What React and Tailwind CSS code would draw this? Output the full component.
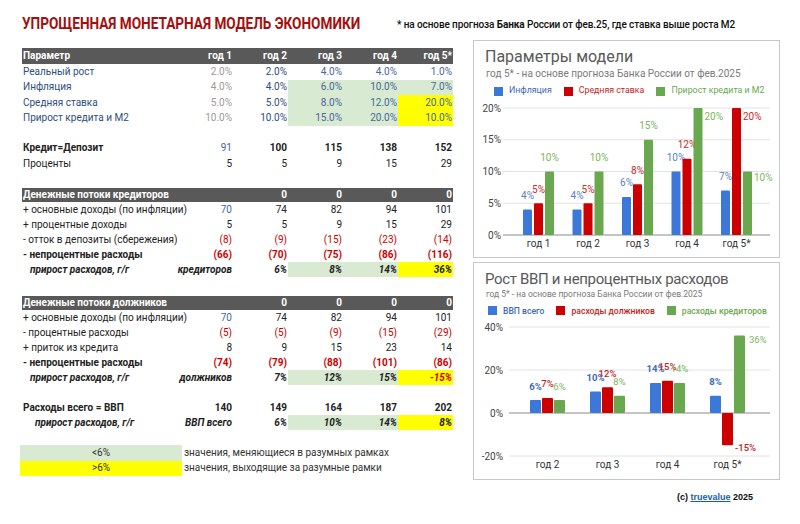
const GREEN = 'bg-[#d9ead3]';
const YELLOW = 'bg-[#ffff00]';
const GRAY = 'text-[#9a9a9a]';
const NAVY = 'text-[#2e4e7e]';
const BLUE = 'text-[#45689c]';
const RED = 'text-[#cc0000]';

const BLUE_C = '#3c78d8';
const RED_C = '#cc0000';
const GREEN_C = '#6aa84f';

function Cell({ v = '', cls = '', bg = '' }) {
  return (
    <div className={`w-[55px] shrink-0 h-full flex items-center justify-end pr-[1px] whitespace-nowrap ${cls} ${bg}`}>
      {v}
    </div>
  );
}

function Row({ label, labelCls = '', h = 'h-[15px]', cells, className = '' }) {
  return (
    <div className={`flex ${h} ${className}`}>
      <div className={`w-[156px] shrink-0 flex items-center pl-[1px] whitespace-nowrap ${labelCls}`}>{label}</div>
      {cells.map((c, i) => (
        <Cell key={i} {...c} />
      ))}
    </div>
  );
}

function HeadRow({ label, cells, h = 'h-[14px]' }) {
  return (
    <Row
      h={h}
      className="bg-[#595959] text-white font-bold"
      label={label}
      cells={cells.map((v) => ({ v }))}
    />
  );
}

const pct = (vals, greens = [], yellows = [], cls = BLUE) =>
  vals.map((v, i) => ({
    v,
    cls: i === 0 ? GRAY : i === 1 ? NAVY : cls,
    bg: greens.includes(i) ? GREEN : yellows.includes(i) ? YELLOW : '',
  }));

const growth = (who, vals, last = '') => [
  { v: who, cls: 'italic font-bold' },
  { v: vals[0], cls: 'italic font-bold' },
  { v: vals[1], cls: 'italic font-bold', bg: GREEN },
  { v: vals[2], cls: 'italic font-bold', bg: GREEN },
  { v: vals[3], cls: `italic font-bold ${last}`, bg: YELLOW },
];

function ModelTable() {
  return (
    <div className="w-[431px] text-[10px] text-[#222] leading-none">
      <HeadRow h="h-[16px]" label="Параметр" cells={['год 1', 'год 2', 'год 3', 'год 4', 'год 5*']} />
      <Row h="h-[15.5px]" label="Реальный рост" labelCls={NAVY} cells={pct(['2.0%', '2.0%', '4.0%', '4.0%', '1.0%'])} />
      <Row h="h-[15.5px]" label="Инфляция" labelCls={NAVY} cells={pct(['4.0%', '4.0%', '6.0%', '10.0%', '7.0%'], [2, 3, 4])} />
      <Row h="h-[15.5px]" label="Средняя ставка" labelCls={NAVY} cells={pct(['5.0%', '5.0%', '8.0%', '12.0%', '20.0%'], [2, 3], [4])} />
      <Row h="h-[15.5px]" label="Прирост кредита и М2" labelCls={NAVY} cells={pct(['10.0%', '10.0%', '15.0%', '20.0%', '10.0%'], [2, 3], [4])} />

      <div className="h-[14.5px]" />
      <Row
        h="h-[15.5px]"
        label="Кредит=Депозит"
        labelCls="font-bold"
        cells={[{ v: '91', cls: BLUE }, ...['100', '115', '138', '152'].map((v) => ({ v, cls: 'font-bold' }))]}
      />
      <Row h="h-[15.5px]" label="Проценты" cells={['5', '5', '9', '15', '29'].map((v) => ({ v }))} />

      <div className="h-[16.5px]" />
      <HeadRow label="Денежные потоки кредиторов" cells={['', '0', '0', '0', '0']} />
      <Row label="+ основные доходы (по инфляции)" cells={[{ v: '70', cls: BLUE }, ...['74', '82', '94', '101'].map((v) => ({ v }))]} />
      <Row label="+ процентные доходы" cells={['5', '5', '9', '15', '29'].map((v) => ({ v }))} />
      <Row label="- отток в депозиты (сбережения)" cells={['(8)', '(9)', '(15)', '(23)', '(14)'].map((v) => ({ v, cls: RED }))} />
      <Row
        label="- непроцентные расходы"
        labelCls="font-bold"
        cells={['(66)', '(70)', '(75)', '(86)', '(116)'].map((v) => ({ v, cls: `${RED} font-bold` }))}
      />
      <Row
        label="прирост расходов, г/г"
        labelCls="italic font-bold pl-[8px]"
        cells={growth('кредиторов', ['6%', '8%', '14%', '36%'])}
      />

      <div className="h-[19px]" />
      <HeadRow label="Денежные потоки должников" cells={['', '0', '0', '0', '0']} />
      <Row label="+ основные доходы (по инфляции)" cells={[{ v: '70', cls: BLUE }, ...['74', '82', '94', '101'].map((v) => ({ v }))]} />
      <Row label="- процентные расходы" cells={['(5)', '(5)', '(9)', '(15)', '(29)'].map((v) => ({ v, cls: RED }))} />
      <Row label="+ приток из кредита" cells={['8', '9', '15', '23', '14'].map((v) => ({ v }))} />
      <Row
        label="- непроцентные расходы"
        labelCls="font-bold"
        cells={['(74)', '(79)', '(88)', '(101)', '(86)'].map((v) => ({ v, cls: `${RED} font-bold` }))}
      />
      <Row
        label="прирост расходов, г/г"
        labelCls="italic font-bold pl-[8px]"
        cells={growth('должников', ['7%', '12%', '15%', '-15%'], RED)}
      />

      <div className="h-[15px]" />
      <Row
        label="Расходы всего = ВВП"
        labelCls="font-bold"
        cells={['140', '149', '164', '187', '202'].map((v) => ({ v, cls: 'font-bold' }))}
      />
      <Row
        label="прирост расходов, г/г"
        labelCls="italic font-bold pl-[13px]"
        cells={growth('ВВП всего', ['6%', '10%', '14%', '8%'])}
      />

      <div className="h-[15px]" />
      <div className="-ml-[2px] flex flex-col text-[#333]">
        <div className="flex h-[15.5px]">
          <div className={`w-[162px] ${GREEN} flex items-center justify-center`}>&lt;6%</div>
          <div className="flex items-center pl-[2px]">значения, меняющиеся в разумных рамках</div>
        </div>
        <div className="flex h-[15.5px]">
          <div className={`w-[162px] ${YELLOW} flex items-center justify-center`}>&gt;6%</div>
          <div className="flex items-center pl-[2px]">значения, выходящие за разумные рамки</div>
        </div>
      </div>
    </div>
  );
}

function Legend({ items, className = '' }) {
  return (
    <div className={`flex items-center h-[16px] whitespace-nowrap ${className}`}>
      {items.map((it) => (
        <div key={it.label} className="flex items-center shrink-0 mr-[12px]">
          <span className="w-[9px] h-[9px] mr-[6px] shrink-0" style={{ background: it.color }} />
          <span className={it.cls}>{it.label}</span>
        </div>
      ))}
    </div>
  );
}

function Bars({ groups, series, zeroY, scale, barW, offsets, labels, labelWeight, fontSize = 10 }) {
  const out = [];
  groups.forEach((g, gi) => {
    series.forEach((s, si) => {
      const v = s.data[gi];
      const x = g.c + offsets[si];
      const top = v >= 0 ? zeroY - v * scale : zeroY;
      const h = Math.abs(v) * scale;
      out.push(<rect key={`b${gi}${si}`} x={x} y={top} width={barW} height={h} rx={1} fill={s.color} />);
      const custom = labels[`${gi}-${si}`];
      let lx = x + barW / 2;
      let ly = top - 10.5;
      let anchor = 'middle';
      if (custom) {
        lx = x + barW + custom.dx;
        ly = custom.y;
        anchor = 'start';
      }
      out.push(
        <text
          key={`l${gi}${si}`}
          x={lx}
          y={ly}
          textAnchor={anchor}
          fontSize={fontSize}
          fontWeight={labelWeight[si]}
          fill={s.label}
        >
          {v}%
        </text>
      );
    });
  });
  return out;
}

function ParamsChart() {
  const zeroY = 136;
  const scale = 6.35;
  const groups = [64.5, 114, 163.5, 213, 262.5].map((c, i) => ({ c, name: `год ${i + 1}${i === 4 ? '*' : ''}` }));
  const series = [
    { color: BLUE_C, label: '#5a7fbf', data: [4, 4, 6, 10, 7] },
    { color: RED_C, label: '#cc2a2a', data: [5, 5, 8, 12, 20] },
    { color: GREEN_C, label: '#7db560', data: [10, 10, 15, 20, 10] },
  ];
  return (
    <div className="w-[307px] h-[218px] border border-[#c8c8c8] overflow-hidden">
      <div className="pl-[11px] pt-[6px]">
        <div className="text-[16px] leading-[20px] text-[#595959]">Параметры модели</div>
        <div className="text-[10px] leading-[14px] text-[#7a7a7a] pl-[1px]">
          год 5* - на основе прогноза Банка России от фев.2025
        </div>
        <Legend
          className="mt-[2px] ml-[9px] text-[8.8px]"
          items={[
            { label: 'Инфляция', color: BLUE_C, cls: 'text-[#3d6ab8]' },
            { label: 'Средняя ставка', color: RED_C, cls: 'text-[#c21e1e]' },
            { label: 'Прирост кредита и М2', color: GREEN_C, cls: 'text-[#6aa84f]' },
          ]}
        />
      </div>
      <svg width="305" height="158" className="block" fontFamily="Roboto, sans-serif">
        {[0, 5, 10, 15, 20].map((t) => {
          const y = zeroY - t * scale;
          return (
            <g key={t}>
              <line x1="29" x2="296" y1={y} y2={y} stroke={t === 0 ? '#8a8a8a' : '#e2e2e2'} strokeWidth="1" />
              <text x="27" y={y + 3.5} textAnchor="end" fontSize="10" fill="#444">
                {t}%
              </text>
            </g>
          );
        })}
        <Bars
          groups={groups}
          series={series}
          zeroY={zeroY}
          scale={scale}
          barW={9}
          offsets={[-15.5, -4.5, 6.5]}
          labelWeight={[400, 400, 400]}
          labels={{ '3-2': { dx: 2, y: 20.5 }, '4-1': { dx: 2, y: 20.5 }, '4-2': { dx: 2, y: 81.5 } }}
        />
        {groups.map((g) => (
          <text key={g.name} x={g.c} y="147.5" textAnchor="middle" fontSize="10" fill="#333">
            {g.name}
          </text>
        ))}
      </svg>
    </div>
  );
}

function GrowthChart() {
  const zeroY = 94;
  const scale = 2.15;
  const groups = [73.5, 133.5, 193.5, 253.5].map((c, i) => ({ c, name: `год ${i + 2}${i === 3 ? '*' : ''}` }));
  const series = [
    { color: BLUE_C, label: '#3d6ab8', data: [6, 10, 14, 8] },
    { color: RED_C, label: '#c21e1e', data: [7, 12, 15, -15] },
    { color: GREEN_C, label: '#7db560', data: [6, 8, 14, 36] },
  ];
  return (
    <div className="w-[307px] h-[218px] border border-[#c8c8c8] overflow-hidden mt-[4px]">
      <div className="pl-[11px] pt-[6px]">
        <div className="text-[15px] leading-[20px] tracking-[-0.35px] text-[#595959] whitespace-nowrap">
          Рост ВВП и непроцентных расходов
        </div>
        <div className="text-[8.5px] leading-[10px] text-[#7a7a7a] pl-[1px] whitespace-nowrap">
          год 5* - на основе прогноза Банка России от фев.2025
        </div>
        <Legend
          className="mt-[4px] ml-[3px] text-[8.6px] font-medium"
          items={[
            { label: 'ВВП всего', color: BLUE_C, cls: 'text-[#3d6ab8]' },
            { label: 'расходы должников', color: RED_C, cls: 'text-[#c21e1e]' },
            { label: 'расходы кредиторов', color: GREEN_C, cls: 'text-[#6aa84f]' },
          ]}
        />
      </div>
      <svg width="305" height="160" className="block" fontFamily="Roboto, sans-serif">
        {[40, 20, 0, -20].map((t) => {
          const y = zeroY - t * scale;
          return (
            <g key={t}>
              <line x1="35" x2="296" y1={y} y2={y} stroke={t === 0 ? '#8a8a8a' : '#e2e2e2'} strokeWidth="1" />
              <text x="29" y={y + 3.5} textAnchor="end" fontSize="10" fill="#444">
                {t}%
              </text>
            </g>
          );
        })}
        <Bars
          groups={groups}
          series={series}
          zeroY={zeroY}
          scale={scale}
          barW={11}
          fontSize={9.5}
          offsets={[-17.5, -5.5, 6.5]}
          labelWeight={[700, 500, 400]}
          labels={{ '3-1': { dx: 2, y: 131.5 }, '3-2': { dx: 4, y: 23.5 } }}
        />
        {groups.map((g) => (
          <text key={g.name} x={g.c} y="148.5" textAnchor="middle" fontSize="10" fill="#333">
            {g.name}
          </text>
        ))}
      </svg>
    </div>
  );
}

export default function App() {
  return (
    <div className="w-[800px] h-[524px] bg-white overflow-hidden font-['Roboto',sans-serif]">
      <div className="h-[40px] pt-[8px] flex items-center">
        <div className="w-[397px] shrink-0 pl-[22px]">
          <span className="inline-block origin-left scale-x-[0.85] text-[16px] font-bold text-[#a50e0e] whitespace-nowrap">
            УПРОЩЕННАЯ МОНЕТАРНАЯ МОДЕЛЬ ЭКОНОМИКИ
          </span>
        </div>
        <div className="text-[10px] font-medium text-[#111] whitespace-nowrap tracking-[-0.1px]">
          * на основе прогноза <b>Банка</b> России от фев.25, где ставка выше роста М2
        </div>
      </div>
      <div className="flex">
        <div className="pl-[22px] pt-[8px]">
          <ModelTable />
        </div>
        <div className="ml-[20px] flex flex-col">
          <ParamsChart />
          <GrowthChart />
          <div className="mt-[12px] h-[12px] flex items-center justify-end pr-[27px] text-[9px] font-bold font-['Liberation_Sans',sans-serif] text-[#111]">
            (c)&nbsp;<span className="text-[#1a5fa8] underline">truevalue</span>&nbsp;2025
          </div>
        </div>
      </div>
    </div>
  );
}
